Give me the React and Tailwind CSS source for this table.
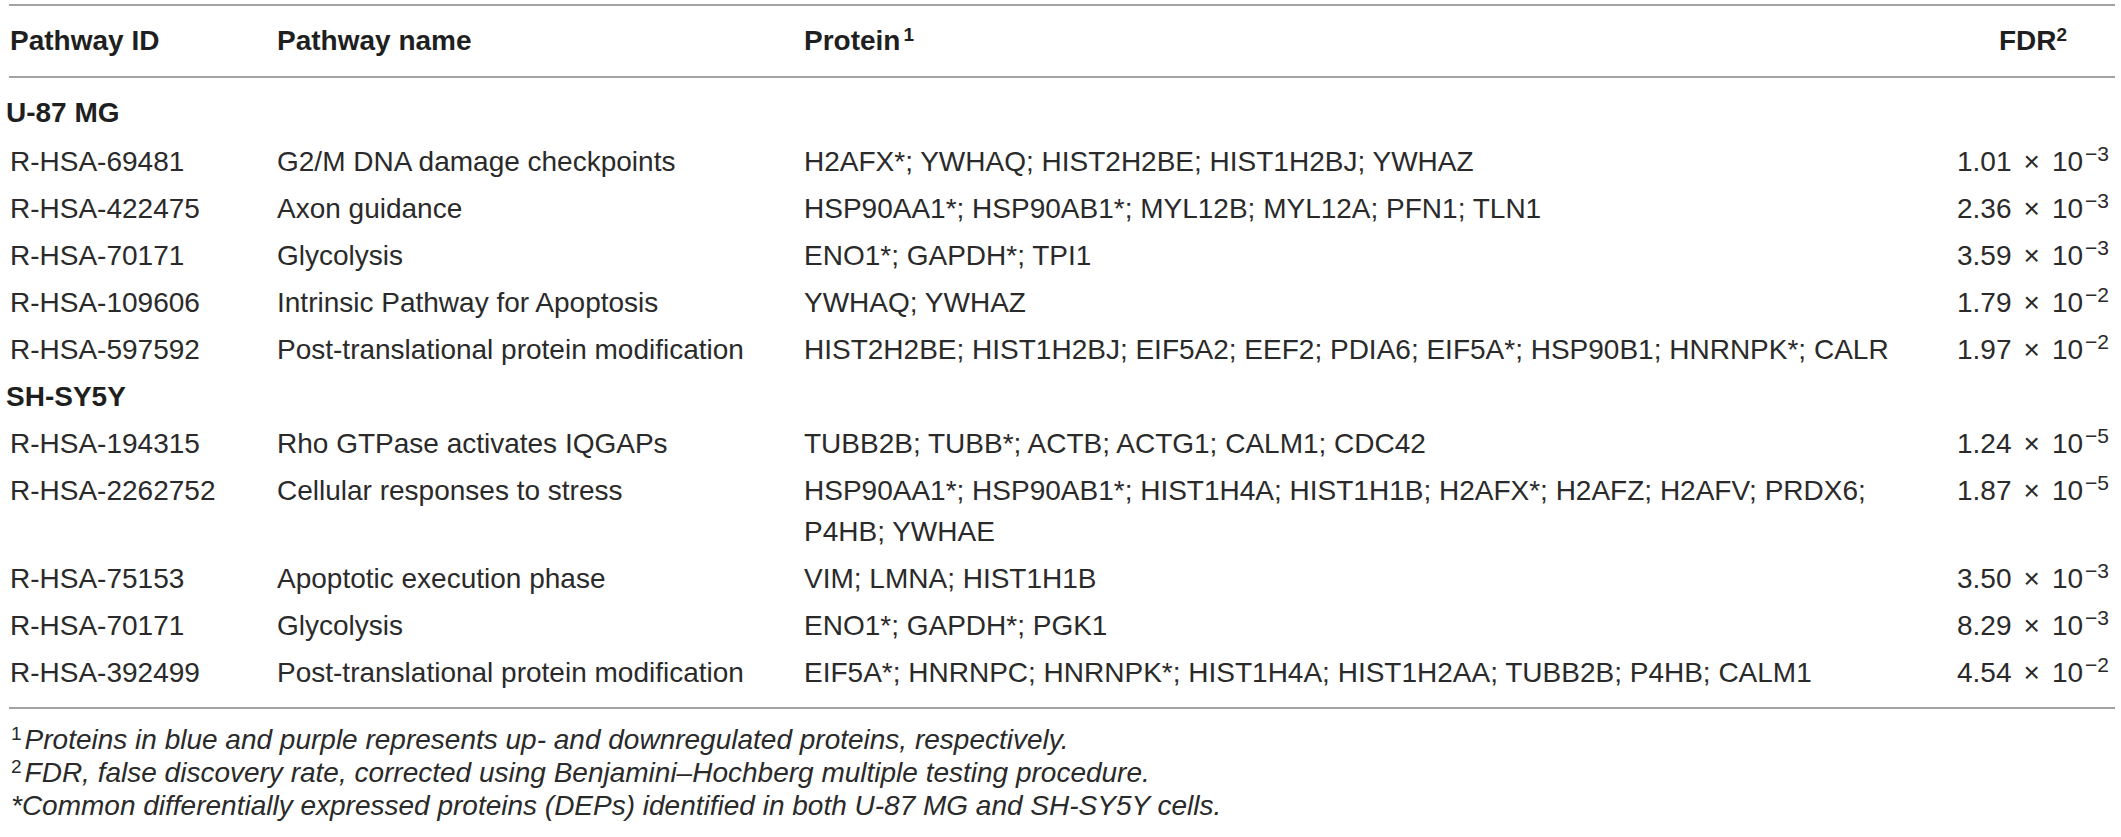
import React from "react";

const groups = [
    {
        name: "U-87 MG",
        first: true,
        rows: [
            ["R-HSA-69481", "G2/M DNA damage checkpoints", "H2AFX*; YWHAQ; HIST2H2BE; HIST1H2BJ; YWHAZ", "1.01", "3"],
            ["R-HSA-422475", "Axon guidance", "HSP90AA1*; HSP90AB1*; MYL12B; MYL12A; PFN1; TLN1", "2.36", "3"],
            ["R-HSA-70171", "Glycolysis", "ENO1*; GAPDH*; TPI1", "3.59", "3"],
            ["R-HSA-109606", "Intrinsic Pathway for Apoptosis", "YWHAQ; YWHAZ", "1.79", "2"],
            ["R-HSA-597592", "Post-translational protein modification", "HIST2H2BE; HIST1H2BJ; EIF5A2; EEF2; PDIA6; EIF5A*; HSP90B1; HNRNPK*; CALR", "1.97", "2"],
        ],
    },
    {
        name: "SH-SY5Y",
        rows: [
            ["R-HSA-194315", "Rho GTPase activates IQGAPs", "TUBB2B; TUBB*; ACTB; ACTG1; CALM1; CDC42", "1.24", "5"],
            ["R-HSA-2262752", "Cellular responses to stress", "HSP90AA1*; HSP90AB1*; HIST1H4A; HIST1H1B; H2AFX*; H2AFZ; H2AFV; PRDX6; P4HB; YWHAE", "1.87", "5"],
            ["R-HSA-75153", "Apoptotic execution phase", "VIM; LMNA; HIST1H1B", "3.50", "3"],
            ["R-HSA-70171", "Glycolysis", "ENO1*; GAPDH*; PGK1", "8.29", "3"],
            ["R-HSA-392499", "Post-translational protein modification", "EIF5A*; HNRNPC; HNRNPK*; HIST1H4A; HIST1H2AA; TUBB2B; P4HB; CALM1", "4.54", "2"],
        ],
    },
];

const cols = "grid grid-cols-[268px_527px_1147px_164px]";

const Fdr = ({ m, e }) => (
    <span className="whitespace-nowrap">
        {m}
        <span className="mx-[12px]">×</span>
        10
        <sup className="ml-[2px] text-[21px]">−{e}</sup>
    </span>
);

export default function App() {
    return (
        <div className="bg-white pt-[4px] pl-[9px] text-[#2a2a2a] font-['Liberation_Sans',Arial,sans-serif]">
            <div className="w-[2106px] border-t-2 border-b-2 border-[#a3a3a3] pb-[11px] text-[28px] leading-[41px]">
                {/* Header */}
                <div className={`${cols} border-b-2 border-[#a3a3a3] pt-[14px] pb-[15px] font-bold text-[#1f1f1f]`}>
                    <div className="pl-[1px]">Pathway ID</div>
                    <div>Pathway name</div>
                    <div>
                        Protein<sup className="ml-[3px] text-[19px]">1</sup>
                    </div>
                    <div className="text-center">
                        FDR<sup className="text-[19px]">2</sup>
                    </div>
                </div>

                {/* Body */}
                {groups.map((g) => (
                    <div key={g.name}>
                        <div className={`${g.first ? "pt-[14px] pb-[5px]" : "py-[3px]"} -ml-[3px] font-bold text-[#1f1f1f]`}>{g.name}</div>
                        {g.rows.map((r, i) => (
                            <div key={i} className={`${cols} py-[3px]`}>
                                <div className="pl-[1px]">{r[0]}</div>
                                <div>{r[1]}</div>
                                <div className="pr-[30px]">{r[2]}</div>
                                <div className="text-center">
                                    <Fdr m={r[3]} e={r[4]} />
                                </div>
                            </div>
                        ))}
                    </div>
                ))}
            </div>

            {/* Footnotes */}
            <div className="mt-[14px] pl-[2px] text-[28px] leading-[33px] italic">
                <p>
                    <sup className="not-italic text-[19px] mr-[3px]">1</sup>Proteins in blue and purple represents up- and downregulated proteins, respectively.
                </p>
                <p>
                    <sup className="not-italic text-[19px] mr-[3px]">2</sup>FDR, false discovery rate, corrected using Benjamini–Hochberg multiple testing procedure.
                </p>
                <p>*Common differentially expressed proteins (DEPs) identified in both U-87 MG and SH-SY5Y cells.</p>
            </div>
        </div>
    );
}
